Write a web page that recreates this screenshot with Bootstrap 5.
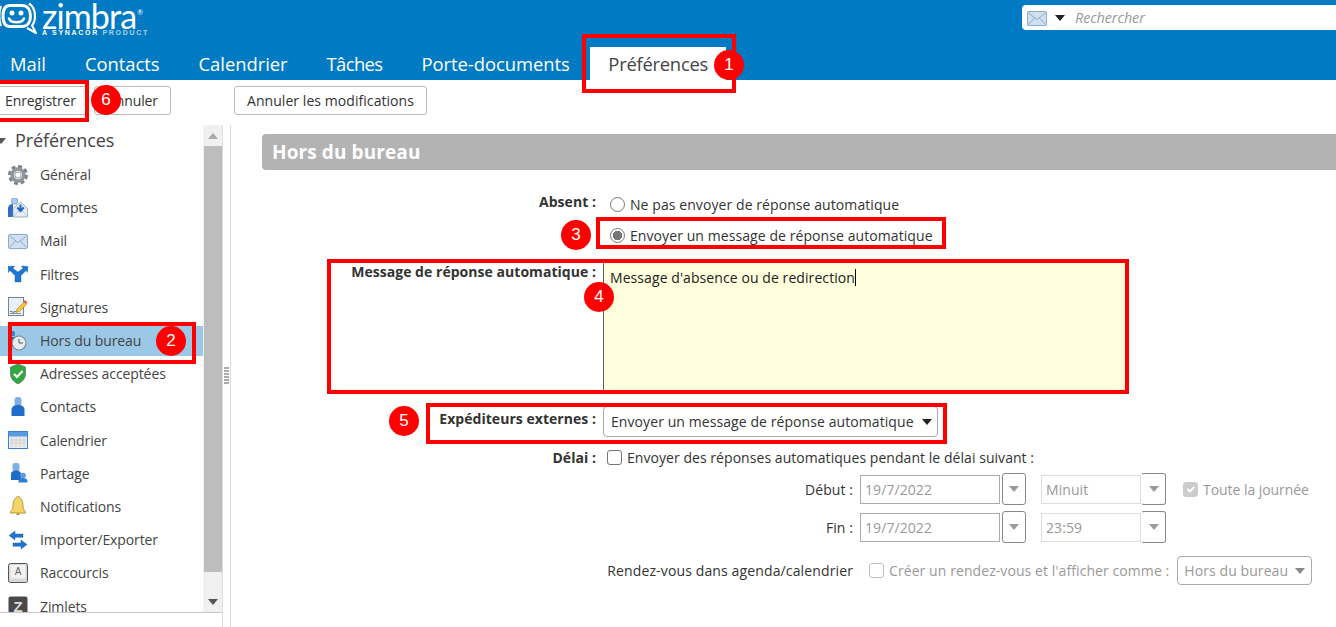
<!DOCTYPE html>
<html lang="fr">
<head>
<meta charset="utf-8">
<title>Zimbra - Préférences</title>
<link rel="stylesheet" href="https://cdn.jsdelivr.net/npm/bootstrap@5.3.0/dist/css/bootstrap.min.css">
<style>
html,body{height:627px;overflow:hidden}
body{position:relative;font-family:"Open Sans","Noto Sans",sans-serif;font-size:14px;color:#333;background:#fff;letter-spacing:-.1px}
.zm-head{background:#007ac2;height:80px}
.zm-top{height:47px}
.zm-logo{width:150px;height:40px;position:relative;color:#fff}
.zm-word{font-family:"Lato",sans-serif;font-size:34px;line-height:27px;letter-spacing:-.9px;margin-left:42px;height:29px;white-space:nowrap;padding-top:2px}
.zm-word sup{font-size:7px;top:-14px;letter-spacing:0;margin-left:1px}
.zm-sub{font-family:"Liberation Sans",sans-serif;font-size:7px;font-weight:700;letter-spacing:1.68px;line-height:7px;margin-left:42px;white-space:nowrap}
.zm-sub span{opacity:.65}
.zm-search{width:314px;height:25px;margin-top:5px;background:#fff;border-radius:4px 0 0 4px;padding-left:5px;font-size:14.4px;color:#999;font-style:italic}
.zm-ph{margin-left:2px}
.zm-caret{width:0;height:0;border:5px solid transparent;border-top:6px solid #222;border-bottom:0}
.zm-tabs{font-size:18.4px;height:33px;padding:0;margin-left:-9.5px;letter-spacing:-.03px}
.zm-tab{color:#fff;padding:0 19.5px;line-height:33px;white-space:nowrap}
.zm-tab-n{letter-spacing:-.6px}
.zm-tab-on{background:#fff;color:#444;margin-left:1px;padding:0 18px;line-height:33px;letter-spacing:-.25px}
.zm-bar{height:45px;padding-top:6px;margin-left:-8px}
.zm-btn{font-size:14px;height:29px;padding:0 12px;border:1px solid #bbb;border-radius:3px;color:#333;background:#fff;letter-spacing:-.1px;line-height:27px;white-space:nowrap}
.zm-b2{margin-left:5px}
.zm-b3{margin-left:63px;letter-spacing:.06px}
.zm-main{height:502px}
.zm-side{width:223px;flex:none;border-right:1px solid #ddd;height:502px}
.zm-treewrap{height:488px;border-bottom:1px solid #c8c8c8;overflow:hidden}
.zm-tree{width:203px;flex:none;overflow:hidden}
.zm-treehead{height:33px;font-size:18px;padding-left:15px;position:relative;line-height:31px;color:#444}
.zm-treehead::before{content:"";position:absolute;left:-4px;top:13px;border:5px solid transparent;border-top:6px solid #555;border-bottom:0}
.zm-item{height:33.2px;padding-left:8px;white-space:nowrap;color:#444}
.zm-item svg{width:20px;height:20px;flex:none;margin-right:12px}
.zm-item-on{background:#9bc8e6;height:30px;margin:1.6px 0}
.zm-scroll{width:19px;flex:none;background:#f0f0f0;height:100%;padding-left:1px}
.zm-arrow{height:21px}
.zm-thumb{height:426px;background:#bdbdbd}
.zm-arr{width:0;height:0;border:5px solid transparent}
.zm-up{border-bottom:6px solid #aaa;border-top:0}
.zm-dn{border-top:6px solid #555;border-bottom:0}
.zm-split{width:8px;flex:none;border-right:1px solid #ddd;height:502px}
.zm-split i{display:block;width:5px;height:2px;background:#aaa;margin-bottom:1px}
.zm-content{flex:1;min-width:0;padding:9px 0 0 31px;letter-spacing:.08px}
.zm-title{height:36px;background:#b3b3b3;color:#fff;font-weight:700;font-size:19px;padding-left:10px;line-height:36px;border-radius:4px 0 0 4px;margin-bottom:22px;letter-spacing:.1px}
.zm-row{display:flex}
.zm-lbl{width:334px;flex:none;text-align:right;font-weight:700;margin-right:7px;color:#333;letter-spacing:.04px}
.zm-lbl-a{margin-top:-1px}
.form-check-input.zm-radio,.form-check-input.zm-chk{width:15px;height:15px;margin:0 5px 0 7px;border-color:#767676;flex:none;background-color:#fff}
.form-check-input.zm-radio:checked{background-color:#fff;border-color:#767676;background-image:radial-gradient(circle,#767676 0 4.5px,transparent 5px)}
.form-check-input.zm-chk{border-radius:3px}
.zm-r1{height:20px;margin-top:2px;margin-bottom:11px}
.zm-r2{height:20px;margin-bottom:17px}
.zm-rowmsg{height:128px;margin-bottom:16px}
.zm-rowmsg .zm-lbl{margin-top:-1px}
.zm-msg{width:523px;height:128px;background:#ffffdd;border-left:1px solid #5a6470;padding:5px 6px;color:#222}
.zm-cursor{display:inline-block;width:1px;height:17px;background:#000;vertical-align:-3px}
.zm-rowsel{height:31px;margin-bottom:10px}
.zm-rowsel .zm-lbl{margin-top:-6px}
.zm-sel{width:335px;height:31px;border:1px solid #aaa;border-radius:4px;padding:0 5px 0 7px;color:#333;background:#fff;white-space:nowrap}
.zm-rowdel{height:20px;margin-bottom:6px}
.zm-rowdel .zm-chk{margin-left:4px}
.zm-del-t{letter-spacing:.05px}
.zm-sub-row{margin-left:342px;display:flex;align-items:center}
.zm-s1{height:32px;margin-bottom:6px}
.zm-s2{height:32px;margin-bottom:13px}
.zm-s3{height:29px}
.zm-sub-lbl{width:249px;flex:none;text-align:right;margin-right:7px;color:#333;white-space:nowrap}
.zm-s3 .zm-sub-lbl{letter-spacing:.13px}
.zm-in{height:29px;border:1px solid #aaa;padding:0 4px;color:#999;background:#fff;line-height:27px}
.zm-in-date{width:140px}
.zm-in-time{width:100px;margin-left:15px;border-color:#ddd}
.zm-drop{width:24px;height:32px;border:1px solid #888;border-radius:3px;background:#fff;margin-left:2px}
.zm-drop-t{width:25px;margin-left:0;border-left-color:#fff}
.zm-drop .zm-arr{border-top:6px solid #999;border-bottom:0}
.zm-dim{color:#999;white-space:nowrap}
.zm-allday{margin-left:17px!important}
.zm-allday-t{letter-spacing:-.05px}
.zm-rdv{margin-left:9px!important}
.zm-sel-sm{width:135px;height:29px;border:1px solid #aaa;border-radius:4px;padding:0 6px;color:#999;margin-left:8px;white-space:nowrap}
.zm-cg{border-top-color:#888}
.form-check-input.zm-on:checked{background-color:#ccc;border-color:#ccc;opacity:1}
.form-check-input:disabled{opacity:.45}
.zm-box{position:absolute;border:4px solid #f00;pointer-events:none}
.zm-num{position:absolute;width:30px;height:30px;border-radius:50%;background:#f00;color:#fff;font-family:"Liberation Sans",sans-serif;font-size:17px;line-height:30px;text-align:center;letter-spacing:0}
.zb1{left:582px;top:34px;width:154px;height:59px}
.zb2{left:8px;top:322px;width:188px;height:42px}
.zb3{left:596px;top:217px;width:350px;height:32px}
.zb4{left:327px;top:259px;width:802px;height:135px}
.zb5{left:426px;top:403px;width:521px;height:41px}
.zb6{left:-4px;top:80px;width:93px;height:42px}
.zn1{left:714px;top:50px}
.zn2{left:156px;top:326px}
.zn3{left:561px;top:220px}
.zn4{left:584px;top:282px}
.zn5{left:389px;top:406px}
.zn6{left:91px;top:85px}
</style>
</head>
<body>
<svg width="0" height="0" class="position-absolute">
<defs>
<symbol id="i-mail" viewBox="0 0 20 20"><rect x=".5" y="3.500" width="19" height="14" rx="1.500" fill="#cfe0f1" stroke="#8fa9c6"/><path d="M1.500 5l8.500 6.500L18.500 5M1.500 16.500l6-6.500M18.500 16.500l-6-6.500" fill="none" stroke="#8fa9c6"/></symbol>
</defs>
</svg>

<header class="zm-head d-flex flex-column">
  <div class="zm-top d-flex justify-content-between">
    <div class="zm-logo">
      <svg class="position-absolute top-0 start-0" width="38" height="36" viewBox="0 0 38 36"><path d="M10 5.500h12c5.500 0 8.500 4 8.500 10.500s-3 10.500-8.500 10.500H10C5 26.500 3 22 3 16S5 5.500 10 5.500z" fill="none" stroke="#fff" stroke-width="3"/><path d="M29 3.500c4.500 3 6 8 6 12.500 0 4-.8 7-3 9.500l4 7.500-9-5" fill="none" stroke="#fff" stroke-width="2.200" stroke-linejoin="round"/><path d="M1 6C-1 12-1 20 1 26" fill="none" stroke="#fff" stroke-width="2"/><circle cx="12" cy="13" r="2.500" fill="#fff"/><circle cx="21" cy="13" r="2.500" fill="#fff"/><path d="M9 18.500c2 5 13 5 15 0" fill="none" stroke="#fff" stroke-width="2.500" stroke-linecap="round"/></svg>
      <div class="zm-word">zimbra<sup>®</sup></div>
      <div class="zm-sub">A SYNACOR <span>PRODUCT</span></div>
    </div>
    <div class="zm-search d-flex align-items-center">
      <svg width="20" height="20"><use href="#i-mail"/></svg>
      <span class="zm-caret ms-2 me-2"></span><span class="zm-ph">Rechercher</span>
    </div>
  </div>
  <nav class="zm-tabs d-flex align-items-end">
    <span class="zm-tab">Mail</span>
    <span class="zm-tab">Contacts</span>
    <span class="zm-tab">Calendrier</span>
    <span class="zm-tab zm-tab-n">Tâches</span>
    <span class="zm-tab">Porte-documents</span>
    <span class="zm-tab-on">Préférences</span>
  </nav>
</header>

<div class="zm-bar d-flex align-items-start">
  <button type="button" class="btn zm-btn">Enregistrer</button>
  <button type="button" class="btn zm-btn zm-b2">Annuler</button>
  <button type="button" class="btn zm-btn zm-b3">Annuler les modifications</button>
</div>

<div class="zm-main d-flex">
  <aside class="zm-side">
    <div class="zm-treewrap d-flex">
      <div class="zm-tree">
        <div class="zm-treehead">Préférences</div>
        <div class="zm-item d-flex align-items-center"><svg viewBox="0 0 20 20"><circle cx="10" cy="10" r="8.300" fill="none" stroke="#7b8289" stroke-width="3.400" stroke-dasharray="3.800 2.700"/><circle cx="10" cy="10" r="6" fill="none" stroke="#8e959c" stroke-width="3.600"/><circle cx="10" cy="10" r="3.200" fill="#fff" stroke="#6b7279" stroke-width=".7"/></svg>Général</div>
        <div class="zm-item d-flex align-items-center"><svg viewBox="0 0 20 20"><rect x="3.500" y="0" width="6" height="6" rx="2" fill="#a9c9ee" stroke="#4f86c9" stroke-width=".6"/><path d="M0 19v-9c0-2 2-4 5-4v13z" fill="#2c6fc4"/><path d="M5 19v-8.500L12.500 4l7 6.500V19z" fill="#e8eef5" stroke="#7f95ad" stroke-width=".7"/><path d="M5.500 18.500l4.500-5h5l4 5" fill="none" stroke="#a9b9ca" stroke-width=".7"/><path d="M12.500 6.500v5.500M9.300 9.500l3.200 3.500 3.200-3.500" fill="none" stroke="#1f66c8" stroke-width="2"/></svg>Comptes</div>
        <div class="zm-item d-flex align-items-center"><svg viewBox="0 0 20 20"><use href="#i-mail"/></svg>Mail</div>
        <div class="zm-item d-flex align-items-center"><svg viewBox="0 0 20 20"><path d="M0 2.500l6.500-.5-1.500 2.500L10 8l5-3.500L13.500 2l6.500.5-.5 6-1.500-2-5 5V18H7v-6.500l-5-5-1.500 2z" fill="#1c76d2" stroke="#0f56a6" stroke-width=".4"/></svg>Filtres</div>
        <div class="zm-item d-flex align-items-center"><svg viewBox="0 0 20 20"><rect x=".5" y=".5" width="15" height="18" fill="#e9f0f8" stroke="#6f86a0"/><path d="M2 15c2-2 2 1 4 0s2 0 3 0" fill="none" stroke="#333" stroke-width=".8"/><path d="M2 16.500h11" stroke="#777" stroke-width=".8"/><path d="M8 15l1-3 7-7 2.500 2.500-7 7z" fill="#f3c13a" stroke="#a67c12" stroke-width=".5"/><path d="M15.500 4.500l1.500-1.500 2.500 2.500L18 7z" fill="#e2574c"/></svg>Signatures</div>
        <div class="zm-item zm-item-on d-flex align-items-center"><svg viewBox="0 0 20 20"><rect x="2" y="0" width="5" height="5" rx="1.500" fill="#3b7fd0"/><path d="M0 6h8v10H0z" fill="#2766b8"/><circle cx="11" cy="12" r="7" fill="#e6ebf0" stroke="#7e8a96" stroke-width="1.200"/><path d="M11 8v4h4" fill="none" stroke="#555"/></svg>Hors du bureau</div>
        <div class="zm-item d-flex align-items-center"><svg viewBox="0 0 20 20"><path d="M10 0l7.500 3v7c0 4.500-3.500 8-7.500 10-4-2-7.500-5.500-7.500-10V3z" fill="#2fa83f" stroke="#6c7a70" stroke-width=".8"/><path d="M6 10l3 3 5.500-6" fill="none" stroke="#fff" stroke-width="2.200"/></svg>Adresses acceptées</div>
        <div class="zm-item d-flex align-items-center"><svg viewBox="0 0 20 20"><rect x="6.500" y="0" width="7" height="9" rx="3" fill="#7db0e6"/><path d="M3.500 19v-6c0-3 2-5 6.500-5s6.500 2 6.500 5v6z" fill="#1f6cc9"/></svg>Contacts</div>
        <div class="zm-item d-flex align-items-center"><svg viewBox="0 0 20 20"><rect x=".5" y="1.500" width="19" height="17" fill="#ececec" stroke="#3b83d6"/><rect x="1" y="2" width="18" height="4.500" fill="#5a9be0"/><path d="M4 7v10M8 7v10M12 7v10M16 7v10M2 10h16M2 13h16" stroke="#c4c4c4" stroke-width=".6"/></svg>Calendrier</div>
        <div class="zm-item d-flex align-items-center"><svg viewBox="0 0 20 20"><rect x="4.500" y="0" width="7" height="8.500" rx="2.500" fill="#7db0e6"/><path d="M3 17v-6c0-2 2-3.500 5-3.500s5 1.500 5 3.500v6z" fill="#1f6cc9"/><circle cx="15" cy="12.500" r="2.800" fill="#5c9be0"/><path d="M10.500 19.500V18c0-1.700 2-3 4.500-3s4.500 1.300 4.500 3v1.500z" fill="#2f7fd6"/></svg>Partage</div>
        <div class="zm-item d-flex align-items-center"><svg viewBox="0 0 20 20"><path d="M10 0c1 0 1.500.8 1.500 1.800C14.500 3 15 7 15 10c0 3 1 4 2.500 5.500v1.500h-15v-1.500C4 14 5 13 5 10c0-3 .5-7 3.500-8.200C8.500.8 9 0 10 0z" fill="#f5d468" stroke="#a8861f" stroke-width=".8"/><path d="M8 17.500c.5 2 3.500 2 4 0z" fill="#a8861f"/></svg>Notifications</div>
        <div class="zm-item d-flex align-items-center"><svg viewBox="0 0 20 20"><path d="M7 1L1 5.500 7 10V7.300h8V4H7zM13 10l6 4.500-6 4.500v-2.700H5V13h8z" fill="#1f74d1" stroke="#12529c" stroke-width=".4"/></svg>Importer/Exporter</div>
        <div class="zm-item d-flex align-items-center"><svg viewBox="0 0 20 20"><rect x=".5" y=".5" width="19" height="19" rx="2" fill="#d8d8d8" stroke="#555"/><rect x="2.500" y="2" width="15" height="13.500" fill="#f2f2f2"/><text x="10" y="12" text-anchor="middle" font-family="Liberation Sans" font-size="10" fill="#666">A</text></svg>Raccourcis</div>
        <div class="zm-item d-flex align-items-center"><svg viewBox="0 0 20 20"><rect x=".5" y=".5" width="19" height="19" rx="2" fill="#4a4a4a"/><text x="10" y="15.500" text-anchor="middle" font-family="Liberation Sans" font-weight="700" font-size="15" fill="#ddd">Z</text></svg>Zimlets</div>
      </div>
      <div class="zm-scroll d-flex flex-column">
        <div class="zm-arrow d-flex justify-content-center align-items-center"><span class="zm-arr zm-up"></span></div>
        <div class="zm-thumb"></div>
        <div class="zm-arrow d-flex justify-content-center align-items-center mt-auto"><span class="zm-arr zm-dn"></span></div>
      </div>
    </div>
  </aside>
  <div class="zm-split d-flex flex-column justify-content-center align-items-center">
    <i></i><i></i><i></i><i></i><i></i><i></i>
  </div>
  <main class="zm-content">
    <div class="zm-title">Hors du bureau</div>
    <div class="zm-row align-items-start">
      <div class="zm-lbl zm-lbl-a">Absent :</div>
      <div>
        <div class="d-flex align-items-center zm-r1"><input class="form-check-input zm-radio mt-0" type="radio" name="a"><span>Ne pas envoyer de réponse automatique</span></div>
        <div class="d-flex align-items-center zm-r2"><input class="form-check-input zm-radio mt-0" type="radio" name="a" checked><span>Envoyer un message de réponse automatique</span></div>
      </div>
    </div>
    <div class="zm-row zm-rowmsg">
      <div class="zm-lbl">Message de réponse automatique :</div>
      <div class="zm-msg">Message d'absence ou de redirection<span class="zm-cursor"></span></div>
    </div>
    <div class="zm-row align-items-center zm-rowsel">
      <div class="zm-lbl">Expéditeurs externes :</div>
      <div class="zm-sel d-flex align-items-center justify-content-between"><span>Envoyer un message de réponse automatique</span><span class="zm-caret"></span></div>
    </div>
    <div class="zm-row align-items-center zm-rowdel">
      <div class="zm-lbl">Délai :</div>
      <input class="form-check-input zm-chk mt-0" type="checkbox"><span class="zm-del-t">Envoyer des réponses automatiques pendant le délai suivant :</span>
    </div>
    <div class="zm-sub-row zm-s1">
      <div class="zm-sub-lbl">Début :</div>
      <div class="zm-in zm-in-date">19/7/2022</div>
      <div class="zm-drop d-flex align-items-center justify-content-center"><span class="zm-arr"></span></div>
      <div class="zm-in zm-in-time">Minuit</div>
      <div class="zm-drop zm-drop-t d-flex align-items-center justify-content-center"><span class="zm-arr"></span></div>
      <input class="form-check-input zm-chk mt-0 zm-allday zm-on" type="checkbox" checked disabled><span class="zm-dim zm-allday-t">Toute la journée</span>
    </div>
    <div class="zm-sub-row zm-s2">
      <div class="zm-sub-lbl">Fin :</div>
      <div class="zm-in zm-in-date">19/7/2022</div>
      <div class="zm-drop d-flex align-items-center justify-content-center"><span class="zm-arr"></span></div>
      <div class="zm-in zm-in-time">23:59</div>
      <div class="zm-drop zm-drop-t d-flex align-items-center justify-content-center"><span class="zm-arr"></span></div>
    </div>
    <div class="zm-sub-row zm-s3">
      <div class="zm-sub-lbl">Rendez-vous dans agenda/calendrier</div>
      <input class="form-check-input zm-chk mt-0 zm-rdv" type="checkbox" disabled><span class="zm-dim">Créer un rendez-vous et l'afficher comme :</span>
      <div class="zm-sel-sm d-flex align-items-center justify-content-between"><span>Hors du bureau</span><span class="zm-caret zm-cg"></span></div>
    </div>
  </main>
</div>

<div class="zm-box zb1"></div><div class="zm-box zb2"></div><div class="zm-box zb3"></div><div class="zm-box zb4"></div><div class="zm-box zb5"></div><div class="zm-box zb6"></div>
<div class="zm-num zn1">1</div><div class="zm-num zn2">2</div><div class="zm-num zn3">3</div><div class="zm-num zn4">4</div><div class="zm-num zn5">5</div><div class="zm-num zn6">6</div>
</body>
</html>
